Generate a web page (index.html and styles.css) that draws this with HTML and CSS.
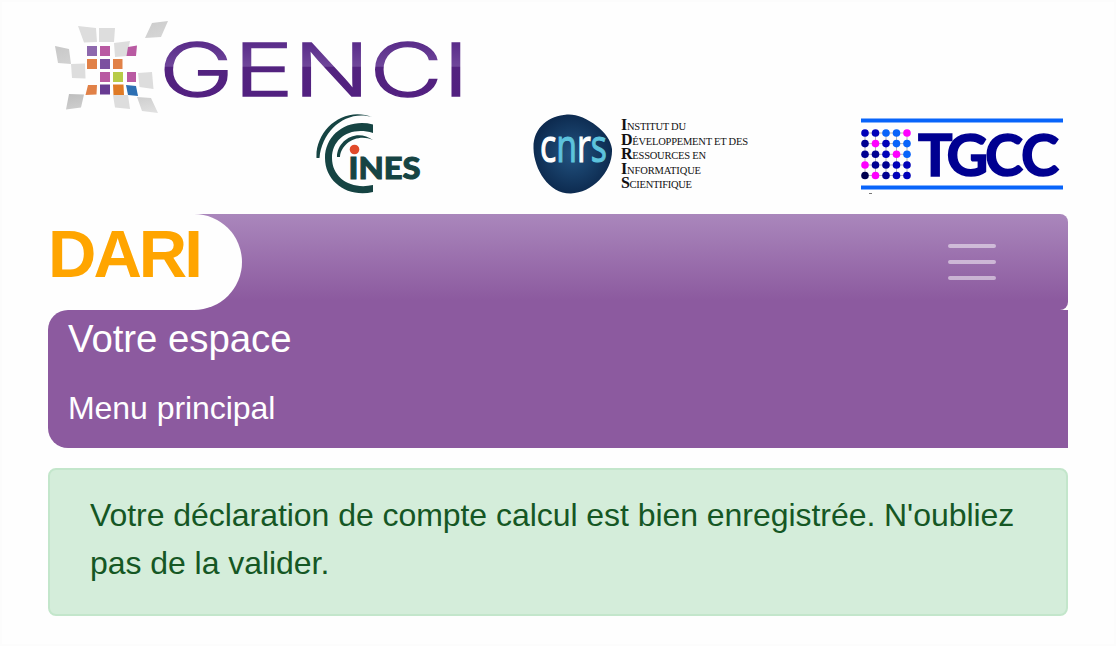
FILE: index.html
```html
<!DOCTYPE html>
<html lang="fr">
<head>
<meta charset="utf-8">
<title>DARI</title>
<link rel="stylesheet" href="styles.css">
</head>
<body>
<div class="page">
  <header class="logos">
    <svg class="genci" viewBox="48 16 424 98" role="img" aria-label="GENCI">
      <defs>
        <linearGradient id="tile" x2="1" y2="1"><stop stop-color="#bdbdbd"/><stop offset="1" stop-color="#e2e2e2"/></linearGradient>
        <linearGradient id="purple" x1="0" y1="42" x2="0" y2="97" gradientUnits="userSpaceOnUse"><stop stop-color="#592b89"/><stop offset=".44" stop-color="#6f469a"/><stop offset=".46" stop-color="#53237f"/><stop offset="1" stop-color="#522080"/></linearGradient>
      </defs>
      <g fill="#dddddd">
        <path d="M78 26l18 2 1 14-13 .5zM99 28h16l-1 14H99zM114 43l16-2-3 15-12 1zM71 64l14-.5.5 15L72 78zM138 73l14-1 1.500 17-14-2z"/>
        <path d="M113 95h15l2 14-15-1.500z"/>
      </g>
      <g fill="url(#tile)">
        <path d="M152 23l16-2-7 16-16 1zM55 46l14 3 2 15-13-1z"/>
        <path d="M69 94l15 .5-3 13-15 2zM137 97l14 1 7 15-16-2z"/>
      </g>
      <path fill="#8d68ad" d="M87 46h10v10H87z"/>
      <path fill="#b95aa2" d="M100 46h10v10h-10zM128 47l9-1.500-1 10.500h-9.500zM100 72h10v10h-10zM127 72h9v10h-9z"/>
      <path fill="#e18147" d="M87 59h10v10H87zM113 59h9.500v10H113zM88 85h9l-.5 9.500-11 .5z"/>
      <path fill="#7c51a0" d="M100 59h10v10h-10z"/>
      <path fill="#b7cb47" d="M113 72h10v10h-10z"/>
      <path fill="#683b92" d="M100 84.500h10v10h-10z"/>
      <path fill="#df7b26" d="M113 84.500h10.500l.5 10.500h-10.500z"/>
      <path fill="#2c6fb3" d="M126 85l10 1 2 10-10-1z"/>
      <text class="genci-name" x="159" y="96" textLength="310" lengthAdjust="spacingAndGlyphs">GENCI</text>
    </svg>
    <div class="partners">
      <svg class="cines" viewBox="314 114 110 80" role="img" aria-label="CINES">
        <path fill="#164443" d="M316.500 158C315 130 344 105 373 117.500C347 109 322 130 319.500 158z"/>
        <path fill="#164443" d="M373 124.500C348 118 325 134 325 158s23 40 48 34v-7c-22 5-41-7-41-27s19-32 41-25z"/>
        <path fill="#164443" d="M337 157c0-17 20-29 36-17-15-7-32 3-33 17z"/>
        <circle cx="354.500" cy="149.500" r="4.800" fill="#e14a2a"/>
        <text class="ines" x="348.500" y="178.500" textLength="72" lengthAdjust="spacingAndGlyphs">INES</text>
      </svg>
      <svg class="idris" viewBox="532 114 218 80" role="img" aria-label="CNRS IDRIS">
        <defs><radialGradient id="ball"><stop stop-color="#225381"/><stop offset="1" stop-color="#0d2b50"/></radialGradient></defs>
        <path fill="url(#ball)" d="M567 114.500C584 113 611 132 612 149c1 23-20 44-41 44.500-22 .5-37-24-37.500-45C533 127 549 116 567 114.500z"/>
        <text class="cnrs" x="540" y="161.500" textLength="67" lengthAdjust="spacingAndGlyphs">c<tspan class="cyan">n</tspan>r<tspan class="cyan">s</tspan></text>
        <g class="institute">
          <text x="621" y="130" textLength="65"><tspan class="initial">I</tspan>NSTITUT DU</text>
          <text x="621" y="144.500" textLength="127"><tspan class="initial">D</tspan>ÉVELOPPEMENT ET DES</text>
          <text x="621" y="159" textLength="85"><tspan class="initial">R</tspan>ESSOURCES EN</text>
          <text x="621" y="173.500" textLength="80"><tspan class="initial">I</tspan>NFORMATIQUE</text>
          <text x="621" y="187.500" textLength="71"><tspan class="initial">S</tspan>CIENTIFIQUE</text>
        </g>
      </svg>
      <svg class="tgcc" viewBox="860 114 204 80" role="img" aria-label="TGCC">
        <path fill="#0864fa" d="M861 118.500h202v4H861zM861 185.500h202v4H861z"/>
        <path stroke="#999" stroke-width=".7" d="M865 133h42M865 143.600h42M865 154.300h42M865 165h42M865 175.500h42M865 133v42M875.500 133v42M886 133v42M896.500 133v42M907 133v42"/>
        <g fill="#0000b8"><circle cx="865" cy="133" r="3.800"/><circle cx="875.500" cy="133" r="3.800"/><circle cx="886" cy="143.600" r="3.800"/><circle cx="886" cy="154.300" r="3.800"/><circle cx="896.500" cy="165" r="3.800"/><circle cx="907" cy="165" r="3.800"/><circle cx="896.500" cy="175.500" r="3.800"/><circle cx="907" cy="175.500" r="3.800"/></g>
        <g fill="#000091"><circle cx="865" cy="143.600" r="3.800"/><circle cx="865" cy="154.300" r="3.800"/><circle cx="875.500" cy="154.300" r="3.800"/><circle cx="875.500" cy="165" r="3.800"/><circle cx="886" cy="165" r="3.800"/><circle cx="886" cy="175.500" r="3.800"/></g>
        <g fill="#0864fa"><circle cx="886" cy="133" r="3.800"/><circle cx="896.500" cy="133" r="3.800"/><circle cx="896.500" cy="143.600" r="3.800"/><circle cx="907" cy="143.600" r="3.800"/><circle cx="907" cy="154.300" r="3.800"/></g>
        <g fill="#ff00ff"><circle cx="907" cy="133" r="3.800"/><circle cx="875.500" cy="143.600" r="3.800"/><circle cx="896.500" cy="154.300" r="3.800"/><circle cx="865" cy="165" r="3.800"/><circle cx="875.500" cy="175.500" r="3.800"/></g>
        <circle cx="865" cy="175.500" r="3.800" fill="#00004f"/>
        <path fill="#777" d="M869 193h3v1h-3z"/>
        <text class="tgcc-name" x="918 946.500 985 1021" y="175.500">TGCC</text>
      </svg>
    </div>
  </header>
  <nav class="navbar">
    <a class="brand">DARI</a>
    <button class="toggler" aria-label="Menu">
      <svg viewBox="0 0 60 60"><path d="M8 14h44M8 30h44M8 46h44"/></svg>
    </button>
  </nav>
  <section class="space">
    <h1 class="space-title">Votre espace</h1>
    <div class="space-menu">Menu principal</div>
  </section>
  <div class="alert"><span class="line">Votre déclaration de compte calcul est bien enregistrée. N'oubliez</span> <span class="line">pas de la valider.</span></div>
</div>
</body>
</html>
```
FILE: styles.css
```css
* { box-sizing: border-box; }
body {
  margin: 0;
  background: #fefefe;
  font-family: "Liberation Sans", Arial, sans-serif;
  font-size: 32px;
  line-height: 48px;
}
.page {
  height: 646px;
  padding: 14px 46px 0;
  border: 2px solid #fcfcfc;
}
.logos { height: 198px; }
.genci { display: block; width: 424px; height: 98px; }
.partners {
  display: flex;
  justify-content: space-between;
  padding: 0 4px 0 266px;
}
.partners svg { display: block; height: 80px; }
.cines { width: 110px; }
.idris { width: 218px; margin-right: 2px; }
.tgcc { width: 204px; }
.genci-name { font: 300 72.5px Inter, sans-serif; fill: url(#purple); stroke: url(#purple); stroke-width: 1.3; }
.ines { font: 900 31px Lato, sans-serif; fill: #164443; stroke: #164443; stroke-width: 1; }
.cnrs { font: 400 45px "Open Sans", sans-serif; fill: #fff; stroke: #fff; stroke-width: 1.1; }
.cnrs .cyan { fill: #5dc3dd; stroke: #5dc3dd; }
.institute { font: 10.5px "Liberation Serif", serif; fill: #111; }
.initial { font-size: 16px; font-weight: bold; }
.tgcc-name { font: 700 57.5px Lato, sans-serif; fill: #000091; stroke: #000091; stroke-width: 1.6; }

.navbar {
  display: flex;
  align-items: center;
  justify-content: space-between;
  height: 96px;
  padding-right: 66px;
  border-radius: 8px;
  background: linear-gradient(#aa87bc, #8c5a9f 90%);
}
.brand {
  width: 194px;
  height: 96px;
  padding: 7px 0 0 0;
  border-radius: 0 48px 48px 0;
  background: #fefefe;
  color: #ffa500;
  font-size: 67px;
  font-weight: bold;
  letter-spacing: -3px;
  line-height: 66px;
}
.toggler { width: 60px; height: 60px; padding: 0; border: 0; background: none; }
.toggler svg { display: block; width: 60px; height: 60px; }
.toggler path { fill: none; stroke: rgba(255, 255, 255, .5); stroke-width: 4; stroke-linecap: round; }

.space {
  height: 138px;
  padding: 6px 20px;
  border-radius: 20px 0 0 20px;
  background: #8c5a9f;
  color: #fff;
}
.space-title { margin: 0 0 22px; font-size: 38.4px; font-weight: normal; line-height: 46px; letter-spacing: -.05px; }
.space-menu { letter-spacing: -.05px; }

.alert {
  height: 148px;
  margin-top: 20px;
  padding: 21px 40px;
  border: 2px solid #c3e6cb;
  border-radius: 8px;
  background: #d4edda;
  color: #155724;
}
.line { display: block; white-space: nowrap; letter-spacing: -.05px; }
```
